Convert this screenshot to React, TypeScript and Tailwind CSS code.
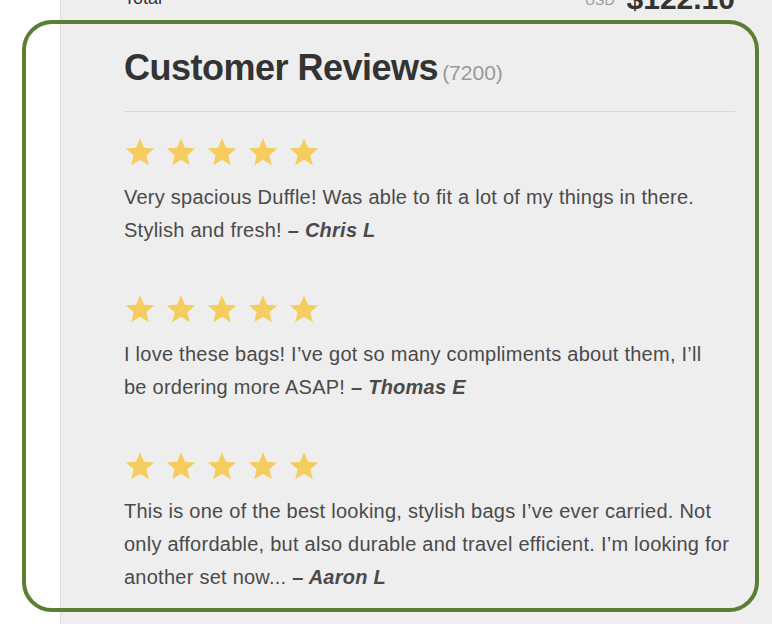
import React from 'react'

const reviews = [
  {
    text: 'Very spacious Duffle! Was able to fit a lot of my things in there. Stylish and fresh!',
    author: 'Chris L'
  },
  {
    text: 'I love these bags! I\u2019ve got so many compliments about them, I\u2019ll be\u00a0ordering more ASAP!',
    author: 'Thomas E'
  },
  {
    text: 'This is one of the best looking, stylish bags I\u2019ve ever carried. Not only affordable, but also durable and travel efficient. I\u2019m looking for another set now...',
    author: 'Aaron L'
  }
]

function Star() {
  return (
    <svg viewBox="0 0 24 24" className="block w-[32px] h-[32px]" fill="#f5cd5e">
      <path d="M12 1.6L14.96 8.72L22.65 9.34L16.79 14.36L18.59 21.86L12 17.84L5.41 21.86L7.21 14.36L1.35 9.34L9.04 8.72Z" />
    </svg>
  )
}

export default function App() {
  return (
    <div
      className="relative w-[772px] h-[624px] overflow-hidden bg-white"
      style={{ fontFamily: '"Liberation Sans", Arial, sans-serif' }}
    >
      <div className="ml-[60px] flex h-full flex-col border-l border-[#dcdcdc] bg-[#eeeeee] pl-[63px] pr-[37px]">
        {/* cut off order total */}
        <div className="-mt-[24px] flex h-[34px] shrink-0 items-end justify-between">
          <span className="mb-[3px] text-[18px] leading-none text-[#333]">Total</span>
          <div className="flex items-end gap-[12px]">
            <span className="mb-[3px] text-[14px] leading-none text-[#999]">USD</span>
            <span className="-mb-[4px] text-[30px] font-bold leading-none text-[#333]">$122.10</span>
          </div>
        </div>

        <div className="mt-[38px] flex items-baseline gap-[4px]">
          <h2 className="text-[36px] font-bold leading-[40px] tracking-[-0.5px] text-[#333]">
            Customer Reviews
          </h2>
          <span className="text-[21px] text-[#999]">(7200)</span>
        </div>
        <div className="mt-[22px] h-px shrink-0 bg-[#d6d6d6]" />

        <div className="pt-[24px]">
          {reviews.map((r, i) => (
            <div key={i} className="mb-[46px]">
              <div className="flex gap-[9px]">
                {[0, 1, 2, 3, 4].map((s) => (
                  <Star key={s} />
                ))}
              </div>
              <p className="mt-[13px] text-[20px] leading-[33px] tracking-[0.25px] text-[#4a4a4a]">
                {r.text} <span className="font-bold italic">– {r.author}</span>
              </p>
            </div>
          ))}
        </div>
      </div>

      {/* highlight outline */}
      <div className="pointer-events-none absolute left-[22px] top-[20px] h-[592px] w-[737px] rounded-[30px] border-4 border-[#5b7e34]" />
    </div>
  )
}
